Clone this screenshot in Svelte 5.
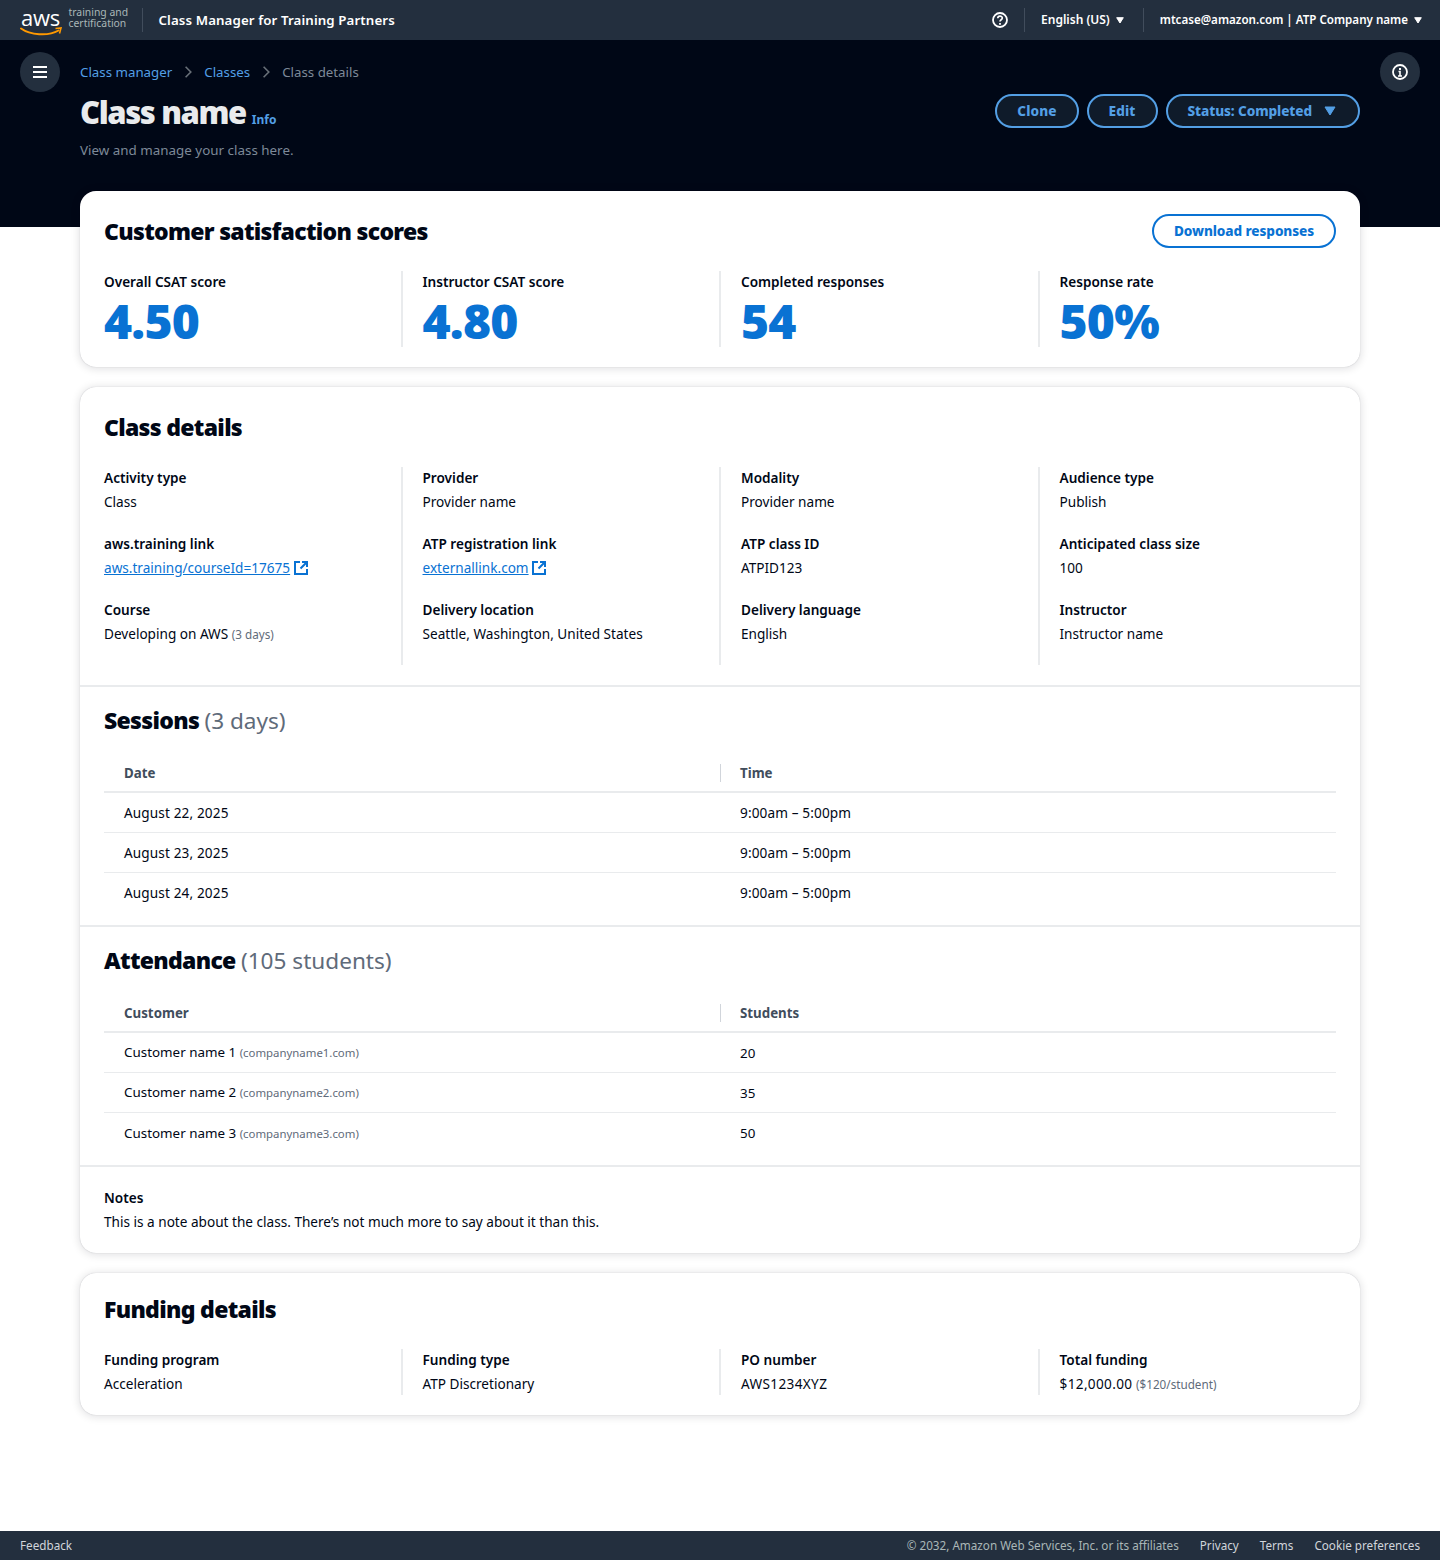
<script>
  const scores = [
    { label: 'Overall CSAT score', value: '4.50' },
    { label: 'Instructor CSAT score', value: '4.80' },
    { label: 'Completed responses', value: '54' },
    { label: 'Response rate', value: '50%' }
  ];
  const sessions = ['August 22, 2025', 'August 23, 2025', 'August 24, 2025'];
  const customers = [
    { name: 'Customer name 1', site: 'companyname1.com', students: 20 },
    { name: 'Customer name 2', site: 'companyname2.com', students: 35 },
    { name: 'Customer name 3', site: 'companyname3.com', students: 50 }
  ];
</script>

{#snippet ext()}
  <svg class="ext" viewBox="0 0 14 14" width="14" height="14" fill="none" stroke="#0972d3" stroke-width="2"><path d="M6 1H1v12h12V8"/><path d="M8 1h5v5M13 1 6.500 7.500"/></svg>
{/snippet}
{#snippet caret()}
  <svg class="caret" viewBox="0 0 8 7" width="8" height="7"><path d="M.7.700h6.600L4 6z" fill="currentColor" stroke="currentColor" stroke-linejoin="round"/></svg>
{/snippet}
{#snippet chev()}
  <svg class="chev" viewBox="0 0 10 16" width="8" height="14" fill="none" stroke="#687078" stroke-width="2"><path d="M2 1.500 8.500 8 2 14.500"/></svg>
{/snippet}

<header class="topbar">
  <div class="brand">
    <div class="logo">
      <span class="aws">aws</span>
      <svg class="smile" viewBox="0 0 42 9" width="42" height="9" fill="none"><path d="M1 1.500C10 8 28 9.500 38.500 3.500" stroke="#f90" stroke-width="2" stroke-linecap="round"/><path d="M35.500 1.500 41 1l-1.500 5.500" stroke="#f90" stroke-width="1.600"/></svg>
    </div>
    <div class="tc">training and<br />certification</div>
    <div class="vr brandvr"></div>
    <div class="appname">Class Manager for Training Partners</div>
  </div>
  <div class="utils">
    <svg viewBox="0 0 16 16" width="16" height="16" fill="none" stroke="#fff" stroke-width="1.800"><circle cx="8" cy="8" r="7"/><path d="M5.800 6.200C5.800 3.500 10.300 3.500 10.300 6c0 1.800-2.300 1.700-2.300 3.500" stroke-width="1.700"/><path d="M8 11v1.800" stroke-width="1.800"/></svg>
    <div class="vr v1"></div>
    <span class="util">English (US)</span>{@render caret()}
    <div class="vr v2"></div>
    <span class="util email">mtcase@amazon.com | ATP Company name</span>{@render caret()}
  </div>
</header>

<section class="hero">
  <button class="round" aria-label="Menu">
    <svg viewBox="0 0 16 16" width="16" height="16" fill="none" stroke="#fff" stroke-width="2"><path d="M1 3h14M1 8h14M1 13h14"/></svg>
  </button>
  <div class="herobody">
    <nav class="crumbs">
      <a href="#a">Class manager</a>{@render chev()}<a href="#a">Classes</a>{@render chev()}<span>Class details</span>
    </nav>
    <div class="titlerow">
      <div>
        <h1>Class name<a class="info" href="#a">Info</a></h1>
        <p class="sub">View and manage your class here.</p>
      </div>
      <div class="actions">
        <button class="btn dark">Clone</button>
        <button class="btn dark">Edit</button>
        <button class="btn dark status">Status: Completed <svg viewBox="0 0 12 10" width="12" height="10"><path d="M1 1h10L6 9z" fill="#539fe5" stroke="#539fe5" stroke-linejoin="round"/></svg></button>
      </div>
    </div>
  </div>
  <button class="round" aria-label="Info">
    <svg viewBox="0 0 16 16" width="16" height="16" fill="none" stroke="#fff" stroke-width="1.800"><circle cx="8" cy="8" r="7"/><path d="M6.500 7.500H8V12M6 12h4" stroke-width="1.600"/><path d="M8 4v2" stroke-width="2"/></svg>
  </button>
</section>

<main class="main">
  <article class="card">
    <div class="head csat">
      <h2>Customer satisfaction scores</h2>
      <button class="btn light">Download responses</button>
    </div>
    <div class="cols score">
      {#each scores as s}
        <div class="cell">
          <div class="lab">{s.label}</div>
          <div class="num">{s.value}</div>
        </div>
      {/each}
    </div>
  </article>

  <article class="card">
    <section class="sec">
      <h2 class="first">Class details</h2>
      <div class="cols details">
        <div class="cell">
          <div class="lab">Activity type</div><div class="val">Class</div>
          <div class="lab">aws.training link</div><div class="val"><a class="lnk" href="#a">aws.training/courseId=17675</a> {@render ext()}</div>
          <div class="lab">Course</div><div class="val">Developing on AWS <small>(3 days)</small></div>
        </div>
        <div class="cell">
          <div class="lab">Provider</div><div class="val">Provider name</div>
          <div class="lab">ATP registration link</div><div class="val"><a class="lnk" href="#a">externallink.com</a> {@render ext()}</div>
          <div class="lab">Delivery location</div><div class="val">Seattle, Washington, United States</div>
        </div>
        <div class="cell">
          <div class="lab">Modality</div><div class="val">Provider name</div>
          <div class="lab">ATP class ID</div><div class="val">ATPID123</div>
          <div class="lab">Delivery language</div><div class="val">English</div>
        </div>
        <div class="cell">
          <div class="lab">Audience type</div><div class="val">Publish</div>
          <div class="lab">Anticipated class size</div><div class="val">100</div>
          <div class="lab">Instructor</div><div class="val">Instructor name</div>
        </div>
      </div>
    </section>

    <section class="sec tbl">
      <h2>Sessions <span>(3 days)</span></h2>
      <div class="table">
        <div class="tr th"><div>Date</div><div>Time</div></div>
        {#each sessions as d}
          <div class="tr dated"><div>{d}</div><div>9:00am – 5:00pm</div></div>
        {/each}
      </div>
    </section>

    <section class="sec tbl">
      <h2>Attendance <span>(105 students)</span></h2>
      <div class="table">
        <div class="tr th"><div>Customer</div><div>Students</div></div>
        {#each customers as c}
          <div class="tr cust"><div>{c.name} <small>({c.site})</small></div><div>{c.students}</div></div>
        {/each}
      </div>
    </section>

    <section class="sec notes">
      <div class="lab">Notes</div>
      <div class="val">This is a note about the class. There’s not much more to say about it than this.</div>
    </section>
  </article>

  <article class="card">
    <section class="fund">
      <h2 class="first">Funding details</h2>
      <div class="cols funding">
        <div class="cell"><div class="lab">Funding program</div><div class="val">Acceleration</div></div>
        <div class="cell"><div class="lab">Funding type</div><div class="val">ATP Discretionary</div></div>
        <div class="cell"><div class="lab">PO number</div><div class="val wide">AWS1234XYZ</div></div>
        <div class="cell"><div class="lab">Total funding</div><div class="val"><span class="wide">$12,000.00</span> <small>($120/student)</small></div></div>
      </div>
    </section>
  </article>
</main>

<footer class="foot">
  <a href="#a">Feedback</a>
  <div class="links">
    <span class="copy">© 2032, Amazon Web Services, Inc. or its affiliates</span>
    <a href="#a">Privacy</a><a href="#a">Terms</a><a href="#a">Cookie preferences</a>
  </div>
</footer>

<style>
  :global(body) {
    margin: 0;
    background: #fff;
    font-family: "Noto Sans", "Open Sans", sans-serif;
    font-size: 13.6px;
    line-height: 20px;
    color: #000716;
  }
  :global(#app) {
    min-height: 1560px;
    display: flex;
    flex-direction: column;
  }
  a { text-decoration: none; color: inherit; }
  h1, h2, p { margin: 0; }

  .topbar {
    height: 40px;
    background: #232f3e;
    color: #fff;
    display: flex;
    align-items: center;
    justify-content: space-between;
    padding: 0 18px 0 20px;
    box-sizing: border-box;
    font-weight: 600;
    font-size: 12px;
  }
  .brand, .utils { display: flex; align-items: center; }
  .logo { width: 42px; height: 28px; position: relative; }
  .aws {
    position: absolute; left: 1px; top: -2px;
    font-family: "Open Sans", sans-serif;
    font-size: 22px; line-height: 26px; font-weight: 500; letter-spacing: -0.3px;
  }
  .smile { position: absolute; left: 0; top: 21px; }
  .tc {
    margin: 0 0 5px 6.500px;
    font-size: 10.400px; line-height: 10.500px; font-weight: 400; color: #aab7b8; width: 58px; white-space: nowrap;
  }
  .vr { width: 1px; height: 24px; background: #414d5c; }
  .brandvr { margin: 0 0 0 15px; }
  .appname { margin-left: 16px; font-size: 13.300px; letter-spacing: 0.1px; }
  .v1 { margin: 0 16px 0 16px; }
  .v2 { margin: 0 16px 0 19px; }
  .util { margin-right: 6px; }
  .email { font-size: 11.600px; }
  .caret { color: #fff; }

  .hero {
    height: 187px;
    box-sizing: border-box;
    background: #000716;
    padding: 12px 20px 0;
    display: grid;
    grid-template-columns: 40px 1fr 40px;
    column-gap: 20px;
    align-items: start;
  }
  .round {
    width: 40px; height: 40px; border-radius: 50%;
    border: 0; padding: 0; background: #232f3e;
    display: flex; align-items: center; justify-content: center;
  }
  .crumbs {
    display: flex; align-items: center;
    height: 40px; color: #7d8998; font-size: 13.300px;
  }
  .crumbs a { color: #539fe5; }
  .chev { margin: 0 12px; }
  .titlerow { display: flex; justify-content: space-between; align-items: flex-start; }
  h1 {
    color: #e9ebed;
    font-size: 31px; line-height: 40px; font-weight: 900; letter-spacing: -1.400px;
  }
  .info { color: #539fe5; font-size: 12px; font-weight: 700; letter-spacing: 0; margin-left: 6px; }
  .sub { color: #7d8998; font-size: 13.400px; }
  .actions { display: flex; gap: 8px; margin-top: 2px; }
  .btn {
    font: inherit;
    font-weight: 800;
    height: 34px;
    border-radius: 20px;
    border: 2px solid;
    padding: 0 20px;
    box-sizing: border-box;
    display: inline-flex; align-items: center;
    letter-spacing: 0.1px;
    white-space: nowrap;
  }
  .dark { background: #0f1b2a; color: #539fe5; border-color: #539fe5; }
  .status { gap: 12px; padding-right: 22px; letter-spacing: -0.1px; }
  .light { background: #fff; color: #0972d3; border-color: #0972d3; letter-spacing: -0.1px; }

  .main {
    margin-top: -36px;
    padding: 0 80px;
    display: flex;
    flex-direction: column;
    gap: 20px;
    position: relative;
  }
  .card {
    background: #fff;
    border-radius: 16px;
    box-shadow: 0 0 1px rgba(0, 7, 22, 0.25), 0 1px 8px 1px rgba(0, 7, 22, 0.12);
    overflow: hidden;
  }
  h2 { font-size: 23px; line-height: 30px; font-weight: 900; letter-spacing: -0.7px; }
  h2 span { font-weight: 400; color: #5f6b7a; letter-spacing: 0; font-size: 22.600px; }
  .head { display: flex; justify-content: space-between; align-items: center; }
  .csat { padding: 23px 24px 0; height: 34px; }

  .cols {
    display: grid;
    grid-template-columns: repeat(4, 1fr);
    margin: 0 4px 0 2px;
  }
  .cell { border-left: 2px solid #e9ebed; padding-left: 20px; min-width: 0; }
  .cell:first-child { border-left-color: transparent; }
  .score { margin-top: 23px; margin-bottom: 20px; }
  .lab { font-weight: 600; font-size: 13.600px; line-height: 20px; padding-top: 1px; }
  .num { font-size: 48px; line-height: 52px; font-weight: 900; color: #0972d3; letter-spacing: -0.800px; margin-top: 3px; }
  .val { margin-top: 4px; line-height: 20px; }
  .details .val { margin-bottom: 21px; }
  small { font-size: 11.700px; color: #5f6b7a; }
  .lnk { color: #0972d3; text-decoration: underline; }
  .ext { vertical-align: -2px; }
  .wide { letter-spacing: 0.35px; }

  .sec { border-top: 2px solid #e9ebed; }
  .sec:first-child { border-top: 0; }
  .sec h2 { padding: 0 24px; }
  .sec h2.first { padding-top: 25px; margin-bottom: 25px; }
  .details { margin-bottom: 20px; }
  .tbl { padding-top: 18px; }
  .table { margin: 17px 24px 0; padding-bottom: 12px; }
  .tr {
    display: grid;
    grid-template-columns: 616px 1fr;
    height: 40px;
    align-items: center;
    border-bottom: 1px solid #e9ebed;
    box-sizing: border-box;
  }
  .tr > div { padding-left: 20px; }
  .tr:last-child { border-bottom: 0; }
  .dated { letter-spacing: 0.13px; }
  .cust { font-size: 13.400px; }
  .cust small { font-size: 11.400px; }
  .th {
    border-bottom: 2px solid #e9ebed; font-weight: 700; color: #414d5c; padding-top: 1px; font-size: 13.300px;
  }
  .th > div:last-child { position: relative; }
  .th > div:last-child::before {
    content: ""; position: absolute; left: 0; top: 1px; height: 18px; width: 1px; background: #d1d5db;
  }
  .notes { padding: 20px 24px 21px; }
  .fund h2.first { padding: 21px 24px 0; margin-bottom: 25px; }
  .funding { margin-bottom: 20px; }
  .funding .cell { padding-bottom: 1px; }

  .foot {
    margin-top: auto;
    height: 29px;
    box-sizing: border-box;
    background: #232f3e;
    color: #d1d5db;
    font-size: 11.700px;
    display: flex; align-items: center; justify-content: space-between;
    padding: 0 20px 1px;
  }
  .links { display: flex; gap: 21px; }
  .copy { color: #aab7b8; }
</style>
